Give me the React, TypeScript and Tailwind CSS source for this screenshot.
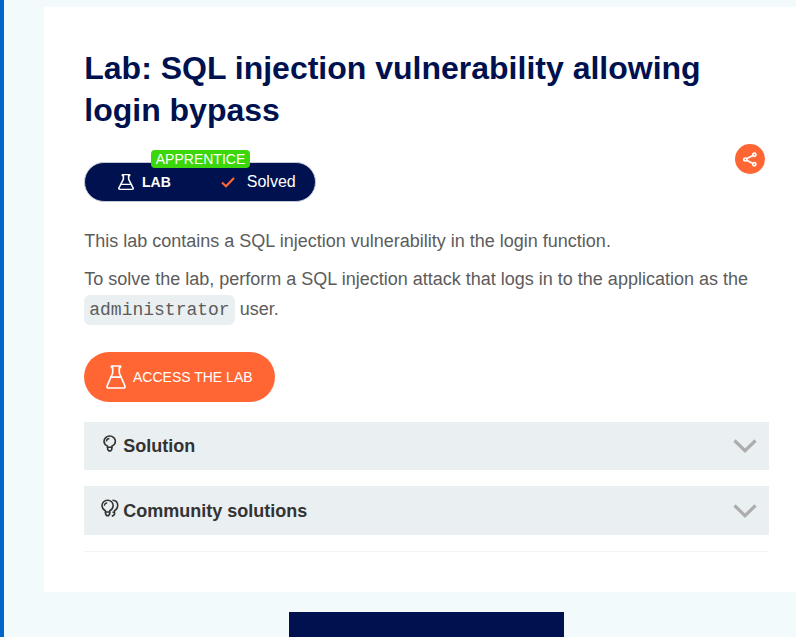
import React from 'react';

function Flask({ className, liquid = 'M5 12.200h10', weight = 1.7 }: { className: string; liquid?: string; weight?: number }) {
  return (
    <svg className={className} preserveAspectRatio="none" viewBox="0 0 20 24" fill="none" stroke="currentColor" strokeWidth={weight} strokeLinecap="round" strokeLinejoin="round">
      <path d="M5.500 1h9v1.500h-1.200V8l5.600 13c.4 1.200-.2 2-1.400 2h-15c-1.200 0-1.800-.8-1.400-2L6.700 8V2.500H5.500z" />
      <path d={liquid} />
    </svg>
  );
}

function Bulb() {
  return (
    <svg className="h-[17px] w-[14px] shrink-0" viewBox="0 0 14 17" fill="none" stroke="#333332" strokeWidth="1.600">
      <path d="M4.500 12.300v-1.200C2.300 10 1 8.300 1 6.300a5.700 5.300 0 0 1 11.400 0c0 2-1.300 3.700-3.500 4.800v1.200z" />
      <path d="M4.700 12.300v2.200l1.200 1.400h1.700l1.200-1.400v-2.200" />
      <path d="M3.400 6.500c0-1.700 1.200-2.900 3-3" strokeWidth="1.300" />
    </svg>
  );
}

function DoubleBulb() {
  return (
    <svg className="h-[18px] w-[18px] shrink-0" viewBox="0 0 18 18" fill="none" stroke="#333332" strokeWidth="1.600">
      <path d="M4.400 13v-1.300C2.300 10.600 1 8.800 1 6.600a5.600 5.400 0 0 1 11.200 0c0 2.200-1.300 4-3.400 5.100V13z" />
      <path d="M4.600 13v2.200l1.200 1.400h1.600l1.200-1.400V13" />
      <path d="M3.400 6.800c0-1.700 1.100-2.900 2.800-3" strokeWidth="1.300" />
      <path d="M11.500 1.300c3.200.1 5.200 2.300 5.200 5.200 0 2.400-1.200 4.100-3.200 5.200v3.700l-1.700 1.500h-1M13.500 13.300h-2" />
    </svg>
  );
}

function Panel({ title, icon, className }: { title: string; icon: React.ReactNode; className: string }) {
  return (
    <button className={`flex w-full items-center bg-[#eaeff2] pr-3 text-left ${className}`}>
      <span className="flex w-[39px] -translate-y-[3px] justify-center pl-[12.500px]">{icon}</span>
      <span className="flex-1 text-lg font-bold text-[#333332]">{title}</span>
      <svg className="h-[14px] w-6" viewBox="0 0 24 14" fill="none" stroke="#adadad" strokeWidth="3.200">
        <path d="M1.500 1.500 12 11.700 22.500 1.500" />
      </svg>
    </button>
  );
}

export default function App() {
  return (
    <div className="h-[637px] overflow-hidden border-l-4 border-[#0066cc] bg-[#f2fafc] pt-[7px] pl-10 font-['Liberation_Sans',Arial,sans-serif] text-[#5c5c5b]">
      <main className="h-[585px] bg-white pt-10 pr-[27px] pl-[40.25px]">
        <h1 className="text-[32px] leading-[42px] font-bold text-[#00114f]">
          Lab: SQL injection vulnerability allowing<br />login bypass
        </h1>
        <div className="mt-[13px] flex h-[57px] items-start justify-between pr-1">
          <div className="relative mt-[18px] flex h-10 w-[231.500px] items-center rounded-full border border-[#c5cad5] bg-[#00114f] text-white">
            <Flask className="ml-[33px] h-4 w-4" liquid="M4.500 15.500h11" weight={2} />
            <span className="ml-[7.750px] text-sm font-bold">LAB</span>
            <svg className="ml-[50px] h-[11px] w-[14px]" viewBox="0 0 14 11" fill="none" stroke="#ff6633" strokeWidth="2.200">
              <path d="M1 5.500 5 9.200 13 1" />
            </svg>
            <span className="ml-3 text-base">Solved</span>
            <span className="absolute -top-[13px] left-[65.750px] h-[18px] w-[99px] rounded bg-[#3bd60b] text-center text-sm leading-[19px]">APPRENTICE</span>
          </div>
          <button className="flex h-[30px] w-[30px] items-center justify-center rounded-full bg-[#ff6633] text-white">
            <svg className="h-[15px] w-[14px]" viewBox="0 0 14 15" fill="none" stroke="currentColor" strokeWidth="1.700">
              <path d="m3.500 6.700 6.500-3.300M3.500 8.300l6.500 3.300" />
              <circle cx="2.300" cy="7.500" r="1.500" />
              <circle cx="11.300" cy="2.700" r="1.600" />
              <circle cx="11.300" cy="12.300" r="1.600" />
            </svg>
          </button>
        </div>
        <p className="mt-[25px] text-lg leading-[30px]">This lab contains a SQL injection vulnerability in the login function.</p>
        <p className="mt-2 h-[60px] text-lg leading-[30px]">
          To solve the lab, perform a SQL injection attack that logs in to the application as the{' '}
          <code className="mt-px inline-block h-[30px] rounded-md bg-[#eaeff2] px-[5px] align-top font-['Liberation_Mono',monospace] text-lg leading-[30px]">administrator</code> <span className="inline-block align-top">user.</span>
        </p>
        <button className="mt-7 flex h-[50px] w-[191px] items-center rounded-full bg-[#ff6633] pl-[21.750px] text-white">
          <Flask className="h-6 w-5" />
          <span className="ml-[7px] text-sm">ACCESS THE LAB</span>
        </button>
        <Panel title="Solution" icon={<Bulb />} className="mt-5 h-12" />
        <Panel title="Community solutions" icon={<DoubleBulb />} className="mt-4 h-[49px]" />
        <hr className="mt-4 border-[#f2f3f4]" />
      </main>
      <div className="mt-5 ml-[245px] h-[25px] w-[275px] bg-[#00114f]" />
    </div>
  );
}
